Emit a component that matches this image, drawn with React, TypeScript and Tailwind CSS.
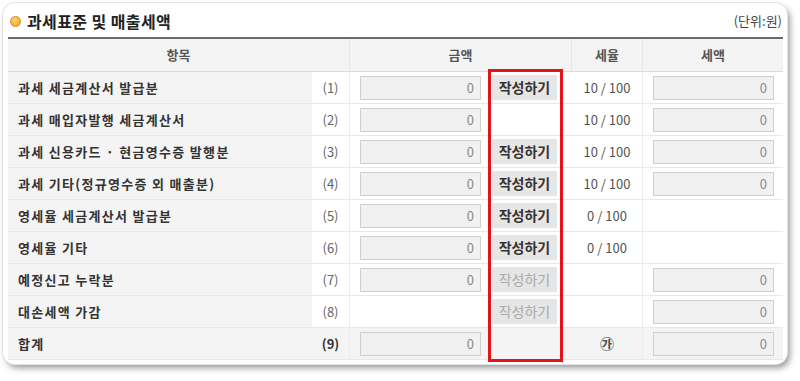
import React from 'react';

type Row = {
  label: string;
  no: string;
  amount: boolean;
  btn: 'on' | 'off' | 'none';
  rate: string;
  tax: boolean;
  total?: boolean;
};

const rows: Row[] = [
  { label: '과세 세금계산서 발급분', no: '(1)', amount: true, btn: 'on', rate: '10 / 100', tax: true },
  { label: '과세 매입자발행 세금계산서', no: '(2)', amount: true, btn: 'none', rate: '10 / 100', tax: true },
  { label: '과세 신용카드 · 현금영수증 발행분', no: '(3)', amount: true, btn: 'on', rate: '10 / 100', tax: true },
  { label: '과세 기타(정규영수증 외 매출분)', no: '(4)', amount: true, btn: 'on', rate: '10 / 100', tax: true },
  { label: '영세율 세금계산서 발급분', no: '(5)', amount: true, btn: 'on', rate: '0 / 100', tax: false },
  { label: '영세율 기타', no: '(6)', amount: true, btn: 'on', rate: '0 / 100', tax: false },
  { label: '예정신고 누락분', no: '(7)', amount: true, btn: 'off', rate: '', tax: true },
  { label: '대손세액 가감', no: '(8)', amount: false, btn: 'off', rate: '', tax: true },
  { label: '합계', no: '(9)', amount: true, btn: 'none', rate: '㉮', tax: true, total: true },
];

const grid = 'grid grid-cols-[304px_38px_137px_85px_71px_140px]';

function ZeroBox() {
  return (
    <div className="flex h-[24px] w-[121px] items-center justify-end border border-[#cfcfcf] bg-[#f1f1f1] pr-[6px] text-[13px] text-[#8a8a8a]">
      0
    </div>
  );
}

export default function App() {
  return (
    <div className="h-[381px] w-[800px] bg-white" style={{ fontFamily: '"Noto Sans CJK KR", "Noto Sans", sans-serif' }}>
      <div className="relative ml-[3px] mt-[3px] h-[361px] w-[784px] rounded-[12px] bg-white px-[4px] pt-[5px] shadow-[3px_4px_6px_rgba(0,0,0,0.4)] ring-1 ring-[#e4e4e4]">
        <div className="flex h-[26px] items-center justify-between pl-[3px] pr-[1px]">
          <div className="flex items-center gap-[6px]">
            <span className="h-[11px] w-[11px] rounded-full border border-[#d98a10] bg-[radial-gradient(circle_at_40%_35%,#ffd27a,#f29a1a)]" />
            <span className="text-[16px] font-bold leading-none tracking-[0.4px] text-[#222]">과세표준 및 매출세액</span>
          </div>
          <span className="text-[13px] text-[#444]">(단위:원)</span>
        </div>

        <div className="ml-[1px] mt-[3px] w-[775px] border-t-2 border-[#6b6b6b]">
          <div className={`${grid} h-[33px] border-b border-[#dcdcdc] bg-[#f4f4f4] text-[13px] font-bold text-[#555]`}>
            <div className="col-span-2 flex items-center justify-center border-r border-[#e6e6e6]">항목</div>
            <div className="col-span-2 flex items-center justify-center border-r border-[#e6e6e6]">금액</div>
            <div className="flex items-center justify-center border-r border-[#e6e6e6]">세율</div>
            <div className="flex items-center justify-center">세액</div>
          </div>

          {rows.map((r) => (
            <div
              key={r.no}
              className={`${grid} h-[32px] border-b border-[#e8e8e8] text-[13px] ${r.total ? 'bg-[#f4f4f4]' : 'bg-white'}`}
            >
              <div className="flex items-center bg-[#f4f4f4] pl-[10px] font-bold tracking-[1.3px] text-[#333]">{r.label}</div>
              <div className={`flex items-center justify-center border-r border-[#ececec] ${r.total ? 'font-bold text-[#333]' : 'text-[#666]'}`}>
                {r.no}
              </div>
              <div className="flex items-center pl-[10px]">{r.amount && <ZeroBox />}</div>
              <div className="flex items-center pl-[5px]">
                {r.btn !== 'none' && (
                  <div
                    className={`flex h-[25px] w-[65px] items-center justify-center bg-[#e6e6e6] text-[14px] ${
                      r.btn === 'on' ? 'font-bold text-[#333]' : 'text-[#aaa]'
                    }`}
                  >
                    작성하기
                  </div>
                )}
              </div>
              <div className={`flex items-center justify-center border-r border-[#ececec] text-[#555] ${r.total ? 'font-bold text-[14px] text-[#333]' : ''}`}>
                {r.rate}
              </div>
              <div className="flex items-center pl-[10px]">{r.tax && <ZeroBox />}</div>
            </div>
          ))}
        </div>

        <div className="absolute left-[485px] top-[66px] h-[293px] w-[75px] border-[3px] border-[#e0161b]" />
      </div>
    </div>
  );
}
